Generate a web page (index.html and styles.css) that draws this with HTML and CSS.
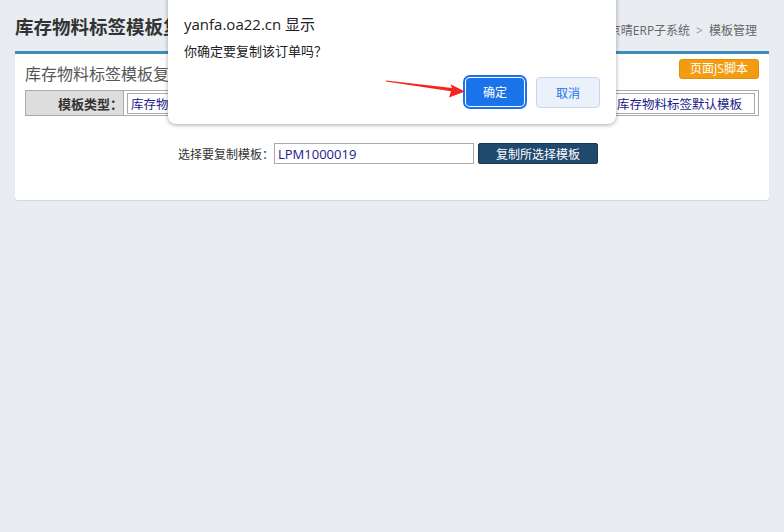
FILE: index.html
```html
<!DOCTYPE html>
<html lang="zh-CN">
<head>
    <meta charset="UTF-8">
    <meta name="viewport" content="width=device-width, initial-scale=1.0">
    <title>库存物料标签模板复制</title>
    <link rel="stylesheet" href="styles.css">
</head>
<body>
    <div class="content-header">
        <h1 class="page-title">库存物料标签模板复制</h1>
        <div class="breadcrumb">
            <span>首页</span><span class="sep">&gt;</span><span>京晴ERP子系统</span><span class="sep">&gt;</span><span>模板管理</span>
        </div>
    </div>

    <div class="box">
        <div class="box-header">
            <div class="box-title">库存物料标签模板复制</div>
            <button class="btn-js">页面JS脚本</button>
        </div>
        <table class="form-table">
            <tr>
                <td class="label">模板类型：</td>
                <td class="value"><input type="text" value="库存物料标签"></td>
                <td class="label">模板名称：</td>
                <td class="value"><input type="text" value="库存物料标签默认模板"></td>
            </tr>
        </table>
        <div class="copy-row">
            <span>选择要复制模板：</span>
            <input type="text" class="copy-input" value="LPM1000019">
            <button class="btn-copy">复制所选择模板</button>
        </div>
    </div>

    <!-- 浏览器确认框 -->
    <div class="dialog">
        <div class="dialog-title">yanfa.oa22.cn 显示</div>
        <div class="dialog-msg">你确定要复制该订单吗？</div>
        <div class="dialog-buttons">
            <button class="btn-ok">确定</button>
            <button class="btn-cancel">取消</button>
        </div>
    </div>

    <svg class="pointer" width="784" height="130" viewBox="0 0 784 130">
        <polygon points="386,80.6 452,88 450.5,84.3 465,91.5 449,97.6 451,91.2 386,81.6" fill="#f2261d"/>
    </svg>
</body>
</html>
```

FILE: styles.css
```css
body {
    margin: 0;
    background-color: #e9edf2;
    font-family: "Open Sans", "Noto Sans CJK SC", sans-serif;
    color: #333;
    height: 100vh;
    position: relative;
    overflow: hidden;
}
.content-header {
    display: flex;
    justify-content: space-between;
    align-items: flex-end;
    padding: 0 27px 0 15px;
    height: 51px;
}
.page-title {
    margin: 0 0 11px 0;
    font-size: 18.5px;
    font-weight: bold;
    color: #333;
    line-height: 26px;
}
.breadcrumb {
    font-size: 12px;
    color: #666;
    margin-bottom: 12px;
}
.breadcrumb .sep {
    color: #999;
    margin: 0 6px;
}
.box {
    margin: 0 15px;
    background-color: #fff;
    border-top: 3px solid #3c8dbc;
    border-radius: 0 0 3px 3px;
    box-shadow: 0 1px 1px rgba(0, 0, 0, 0.1);
    padding: 0 10px 36px 10px;
}
.box-header {
    display: flex;
    justify-content: space-between;
    align-items: flex-start;
    padding-top: 5px;
    height: 31px;
}
.box-title {
    font-size: 16px;
    color: #555;
    line-height: 24px;
    margin-top: 3px;
}
.btn-js {
    width: 80px;
    height: 20px;
    padding: 0;
    background-color: #f39c12;
    color: #fff;
    border: 1px solid #e08e0b;
    border-radius: 3px;
    font-family: inherit;
    font-size: 12px;
    line-height: 18px;
}
.form-table {
    width: 100%;
    border-collapse: collapse;
    table-layout: fixed;
}
.form-table td {
    border: 1px solid #aaa;
    height: 24px;
    padding: 0 3px;
}
.form-table td.label {
    width: 94px;
    background-color: #ddd;
    text-align: right;
    font-size: 13px;
    font-weight: bold;
    color: #333;
    padding-right: 0;
}
.form-table td.value:nth-child(2) {
    width: 381px;
}
.form-table input {
    width: 100%;
    box-sizing: border-box;
    height: 21px;
    border: 1px solid #aaa;
    padding: 0 3px;
    font-family: inherit;
    font-size: 12.5px;
    color: #1a1a8c;
    display: block;
}
.copy-row {
    display: flex;
    justify-content: center;
    align-items: center;
    margin-top: 27px;
    padding-right: 8px;
    font-size: 12px;
    color: #333;
}
.copy-input {
    width: 200px;
    height: 21px;
    box-sizing: border-box;
    border: 1px solid #aaa;
    padding: 0 3px;
    font-family: inherit;
    font-size: 13px;
    color: #1a1a8c;
}
.btn-copy {
    margin-left: 4px;
    width: 120px;
    height: 21px;
    padding: 0;
    background-color: #1f4a6e;
    border: 1px solid #163a57;
    border-radius: 2px;
    color: #fff;
    font-family: inherit;
    font-size: 12px;
}
.dialog {
    position: absolute;
    left: 168px;
    top: -12px;
    width: 448px;
    box-sizing: border-box;
    padding: 26px 16px 16px 16px;
    background-color: #fff;
    border-radius: 8px;
    box-shadow: 0 1px 4px rgba(0, 0, 0, 0.35);
    color: #202124;
}
.dialog-title {
    font-size: 15px;
    line-height: 20px;
}
.dialog-msg {
    font-size: 13px;
    line-height: 18px;
    margin-top: 8px;
}
.dialog-buttons {
    display: flex;
    justify-content: flex-end;
    gap: 9px;
    margin-top: 17px;
}
.dialog-buttons button {
    height: 31px;
    border-radius: 4px;
    font-family: inherit;
    font-size: 12px;
    padding: 0;
}
.btn-ok {
    width: 58px;
    margin: 1px 3px 0 0;
    height: 28px !important;
    background-color: #1a73e8;
    color: #fff;
    border: none;
    box-shadow: 0 0 0 1px #fff, 0 0 0 3px #1a73e8;
}
.btn-cancel {
    width: 64px;
    background-color: #eaf1fb;
    color: #1a73e8;
    border: 1px solid #c6d5ee;
}
.pointer {
    position: absolute;
    left: 0;
    top: 0;
}
```
